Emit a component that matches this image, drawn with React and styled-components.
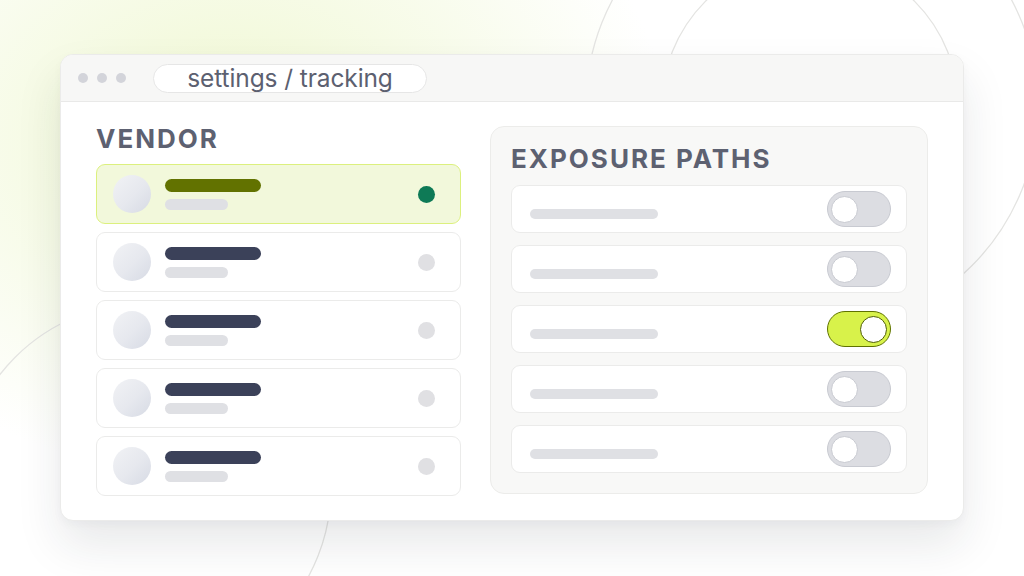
import React from "react";
import styled, { createGlobalStyle } from "styled-components";

const Global = createGlobalStyle`
  html, body { margin: 0; padding: 0; }
  body { font-family: Inter, "Noto Sans", sans-serif; }
  * { box-sizing: border-box; }
`;

const Stage = styled.div`
  position: relative;
  width: 1024px;
  height: 576px;
  overflow: hidden;
  background:
    radial-gradient(ellipse 440px 340px at 230px 140px, #eff7cf 0%, rgba(242, 249, 218, 0.75) 40%, rgba(255, 255, 255, 0) 100%),
    #ffffff;
  display: flex;
  align-items: center;
  justify-content: center;
`;

const Decor = styled.svg`
  position: absolute;
  inset: 0;
  width: 1024px;
  height: 576px;
  pointer-events: none;
`;

const Window = styled.div`
  position: relative;
  width: 904px;
  height: 467px;
  margin-top: -1px;
  background: #ffffff;
  border: 1px solid #ebebea;
  border-radius: 13px;
  box-shadow: 0 24px 46px rgba(30, 35, 50, 0.1), 0 4px 10px rgba(30, 35, 50, 0.03);
  display: flex;
  flex-direction: column;
  overflow: hidden;
`;

const TitleBar = styled.div`
  height: 47px;
  flex: none;
  background: #f7f7f6;
  border-bottom: 1px solid #e9e9e8;
  display: flex;
  align-items: center;
  padding-left: 17px;
`;

const Dots = styled.div`
  display: flex;
  gap: 9px;
  margin-right: 27px;
`;

const Dot = styled.span`
  width: 10px;
  height: 10px;
  border-radius: 50%;
  background: #d3d4da;
`;

const UrlPill = styled.div`
  width: 274px;
  height: 29px;
  border-radius: 15px;
  background: #ffffff;
  border: 1px solid #e6e6e6;
  display: flex;
  align-items: center;
  justify-content: center;
  font-size: 24.5px;
  line-height: 29px;
  color: #5c6070;
  letter-spacing: -0.1px;
  padding-top: 1px;
`;

const Body = styled.div`
  flex: 1;
  display: flex;
  gap: 29px;
  padding: 21px 35px 0 35px;
`;

const VendorCol = styled.div`
  width: 365px;
  display: flex;
  flex-direction: column;
`;

const Heading = styled.h2`
  margin: 0;
  font-size: 26px;
  line-height: 32px;
  font-weight: 700;
  letter-spacing: 2px;
  color: #5d6171;
`;

const VendorList = styled.div`
  margin-top: 9px;
  display: flex;
  flex-direction: column;
  gap: 8px;
`;

const VendorRow = styled.div`
  height: 60px;
  border-radius: 9px;
  border: 1.5px solid ${(p) => (p.$active ? "#dcf07e" : "#ebebea")};
  background: ${(p) => (p.$active ? "#f2f8db" : "#ffffff")};
  display: flex;
  align-items: center;
  padding: 0 25px 0 16px;
`;

const Avatar = styled.div`
  width: 38px;
  height: 38px;
  border-radius: 50%;
  background: linear-gradient(135deg, #f1f2f5 0%, #e6e8ee 55%, #d6dae4 100%);
  flex: none;
`;

const Lines = styled.div`
  margin-left: 14px;
  display: flex;
  flex-direction: column;
  gap: 7px;
  flex: 1;
`;

const NameBar = styled.div`
  width: 96px;
  height: 13px;
  border-radius: 7px;
  background: ${(p) => (p.$active ? "#627200" : "#3b4159")};
`;

const SubBar = styled.div`
  width: 63px;
  height: 11px;
  border-radius: 6px;
  background: #dfe0e4;
`;

const Status = styled.div`
  width: 17px;
  height: 17px;
  border-radius: 50%;
  background: ${(p) => (p.$active ? "#0e7a56" : "#e0e0e3")};
  flex: none;
`;

const PathsPanel = styled.div`
  width: 438px;
  height: 368px;
  margin-top: 3px;
  border-radius: 14px;
  border: 1.5px solid #ececea;
  background: #f8f8f7;
  padding: 16px 20px 0 20px;
  display: flex;
  flex-direction: column;
`;

const PathList = styled.div`
  margin-top: 10px;
  display: flex;
  flex-direction: column;
  gap: 12px;
`;

const PathRow = styled.div`
  height: 48px;
  border-radius: 9px;
  border: 1.5px solid #ebebea;
  background: #ffffff;
  display: flex;
  align-items: center;
  padding: 0 15px 0 18px;
`;

const PathBar = styled.div`
  width: 128px;
  height: 10px;
  border-radius: 5px;
  background: #dfe0e4;
  margin-top: 10px;
`;

const Spacer = styled.div`
  flex: 1;
`;

const Toggle = styled.div`
  width: 64px;
  height: 36px;
  border-radius: 18px;
  border: 1.5px solid ${(p) => (p.$on ? "#5f7200" : "#c8cad1")};
  background: ${(p) => (p.$on ? "#d8f24a" : "#dcdde2")};
  display: flex;
  align-items: center;
  justify-content: ${(p) => (p.$on ? "flex-end" : "flex-start")};
  padding: 0 3px;
`;

const Knob = styled.div`
  width: 27px;
  height: 27px;
  border-radius: 50%;
  background: #ffffff;
  border: 1.5px solid ${(p) => (p.$on ? "#4f5e00" : "#c8cad1")};
`;

const vendors = [true, false, false, false, false];
const paths = [false, false, true, false, false];

export default function App() {
  return (
    <>
      <Global />
      <Stage>
        <Decor viewBox="0 0 1024 576">
          <g fill="none" stroke="#e4e4e2" strokeWidth="1.3">
            <circle cx="812" cy="106" r="226" />
            <circle cx="810" cy="106" r="148" />
            <circle cx="146" cy="488" r="185" />
          </g>
        </Decor>
        <Window>
          <TitleBar>
            <Dots>
              <Dot />
              <Dot />
              <Dot />
            </Dots>
            <UrlPill>settings / tracking</UrlPill>
          </TitleBar>
          <Body>
            <VendorCol>
              <Heading>VENDOR</Heading>
              <VendorList>
                {vendors.map((a, i) => (
                  <VendorRow key={i} $active={a}>
                    <Avatar />
                    <Lines>
                      <NameBar $active={a} />
                      <SubBar />
                    </Lines>
                    <Status $active={a} />
                  </VendorRow>
                ))}
              </VendorList>
            </VendorCol>
            <PathsPanel>
              <Heading>EXPOSURE PATHS</Heading>
              <PathList>
                {paths.map((on, i) => (
                  <PathRow key={i}>
                    <PathBar />
                    <Spacer />
                    <Toggle $on={on}>
                      <Knob $on={on} />
                    </Toggle>
                  </PathRow>
                ))}
              </PathList>
            </PathsPanel>
          </Body>
        </Window>
      </Stage>
    </>
  );
}
